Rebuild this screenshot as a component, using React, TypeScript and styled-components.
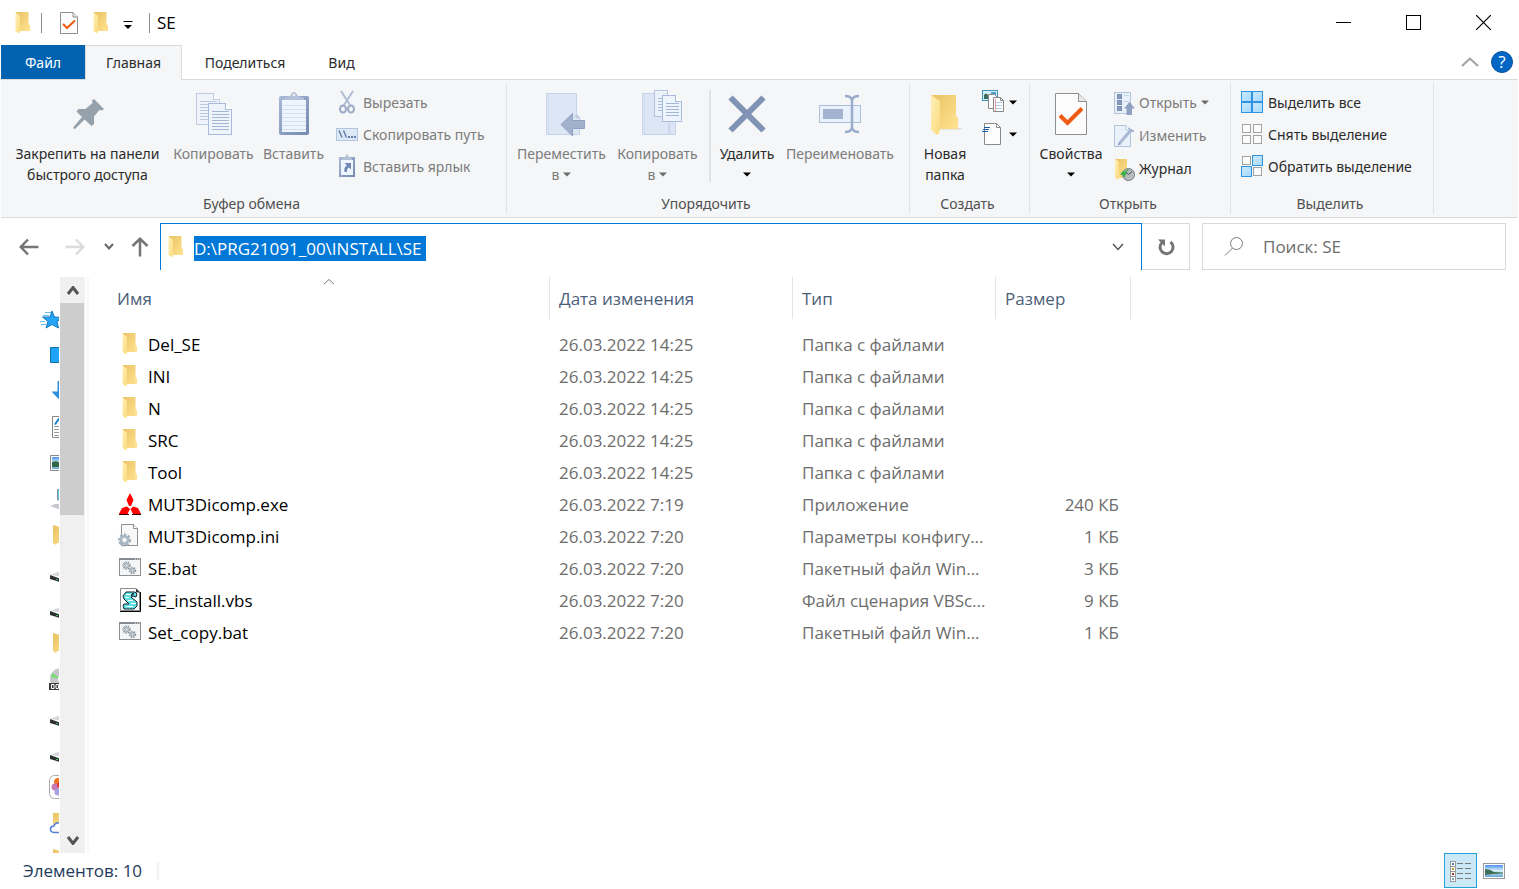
import React from "react";
import styled, { createGlobalStyle } from "styled-components";

const GlobalStyle = createGlobalStyle`
  *, *::before, *::after { box-sizing: border-box; }
  html, body { margin: 0; padding: 0; background: #fff; }
  body, button, input { font-family: "Open Sans", "Noto Sans", sans-serif; }
  button { border: 0; padding: 0; margin: 0; background: none; color: inherit; }
  svg { display: block; flex: none; }
`;

const ribbonFont = `"Noto Sans", "Open Sans", sans-serif`;

/* ---------- Layout ---------- */

const Window = styled.div`
  display: flex;
  flex-direction: column;
  height: 100vh;
  padding: 0 1px;
  overflow: hidden;
  background: #fff;
  color: #000;
  font-size: 17px;
`;

const TitleBar = styled.header`
  display: flex;
  align-items: center;
  height: 45px;
  flex: none;
  padding-left: 14px;
`;

const TitleSeparator = styled.span`
  width: 1px;
  height: 20px;
  margin: 0 7px 0 10px;
  background: #8c8c8c;
`;

const QuickAccess = styled.div`
  display: flex;
  align-items: center;
  padding-left: 4px;
`;

const QuickButton = styled.button<{ $narrow?: boolean }>`
  display: grid;
  place-items: center;
  width: ${(p) => (p.$narrow ? 22 : 32)}px;
  height: 32px;
`;

const WindowTitle = styled.h1`
  flex: 1;
  margin: 0;
  font-size: 17px;
  font-weight: 400;
`;

const CaptionButton = styled.button`
  display: grid;
  place-items: center;
  width: 70px;
  height: 45px;
`;

const TabBar = styled.nav`
  display: flex;
  height: 35px;
  flex: none;
  border-bottom: 1px solid #dadbdc;
`;

const Tab = styled.button<{ $width: number; $kind?: "file" | "active" }>`
  width: ${(p) => p.$width}px;
  height: ${(p) => (p.$kind === "active" ? 35 : 34)}px;
  padding-bottom: ${(p) => (p.$kind === "active" ? 2 : 0)}px;
  font-family: ${ribbonFont};
  font-size: 14px;
  color: ${(p) => (p.$kind === "file" ? "#fff" : "#2b2b2b")};
  background: ${(p) =>
    p.$kind === "file" ? "#0063b1" : p.$kind === "active" ? "#f5f6f7" : "none"};
  border: ${(p) => (p.$kind === "active" ? "1px solid #dadbdc" : "0")};
  border-bottom: 0;
`;

const TabTools = styled.div`
  display: flex;
  align-items: center;
  gap: 12px;
  margin-left: auto;
  padding-right: 5px;
`;

const HelpButton = styled.button`
  width: 22px;
  height: 22px;
  border: 1px solid #0a4f9c;
  border-radius: 50%;
  background: #0067c5;
  color: #fff;
  font-size: 17px;
  line-height: 20px;
`;

const Ribbon = styled.div`
  display: flex;
  height: 138px;
  flex: none;
  background: #f5f6f7;
  border-bottom: 1px solid #dadbdc;
`;

const Group = styled.section<{ $width: number }>`
  display: flex;
  flex-direction: column;
  justify-content: space-between;
  width: ${(p) => p.$width}px;
  margin: 3px 0;
  border-right: 1px solid #e2e3e4;
`;

const GroupBody = styled.div`
  display: flex;
  align-items: flex-start;
  gap: 4px;
  padding: 0 5px;
`;

const GroupTitle = styled.h2`
  margin: 0;
  padding-right: 4px;
  font-family: ${ribbonFont};
  font-size: 14px;
  font-weight: 400;
  line-height: 21px;
  text-align: center;
  color: #505050;
`;

const LargeButton = styled.button<{ $width: number }>`
  display: flex;
  flex-direction: column;
  align-items: center;
  width: ${(p) => p.$width}px;
  padding-top: 7px;
  font-family: ${ribbonFont};
  font-size: 14px;
  line-height: 21px;
  color: #2b2b2b;
  white-space: nowrap;

  &:disabled { color: #7c7c7c; }
`;

const LargeLabel = styled.span`
  display: flex;
  flex-direction: column;
  align-items: center;
  margin-top: 5px;
`;

const LabelLine = styled.span`
  display: flex;
  align-items: center;
  gap: 4px;
  height: 21px;
`;

const SmallColumn = styled.div`
  display: flex;
  flex-direction: column;
  padding: 3px 0 0 3px;
`;

const SmallButton = styled.button<{ $tall?: boolean }>`
  display: flex;
  align-items: center;
  gap: 4px;
  height: ${(p) => (p.$tall ? 33 : 32)}px;
  font-family: ${ribbonFont};
  font-size: 14px;
  color: #2b2b2b;
  white-space: nowrap;

  &:disabled { color: #7c7c7c; }
`;

const BodySeparator = styled.span`
  width: 2px;
  height: 92px;
  margin: 7px 0 0 5px;
  background: #e2e3e4;
`;

const NavRow = styled.div`
  display: flex;
  align-items: center;
  height: 59px;
  flex: none;
  padding: 5px 12px 7px 5px;
`;

const NavButton = styled.button<{ $width: number }>`
  display: grid;
  place-items: center;
  width: ${(p) => p.$width}px;
  height: 47px;
`;

const AddressBar = styled.form`
  display: flex;
  align-items: center;
  flex: 1;
  height: 47px;
  padding-left: 7px;
  border: 1px solid #0078d7;
  border-bottom: 0;
`;

const AddressInput = styled.input`
  width: 232px;
  height: 25px;
  margin: 3px auto 0 10px;
  padding: 0;
  border: 0;
  outline: 0;
  background: #0078d7;
  color: #fff;
  font-size: 17px;
`;

const AddressDrop = styled.button`
  display: grid;
  place-items: center;
  width: 47px;
  height: 45px;
`;

const RefreshButton = styled.button`
  display: grid;
  place-items: center;
  width: 48px;
  height: 47px;
  border: 1px solid #d9d9d9;
  border-left: 0;
`;

const SearchBox = styled.label`
  display: flex;
  align-items: center;
  gap: 19px;
  width: 304px;
  height: 47px;
  margin-left: 12px;
  padding-left: 21px;
  border: 1px solid #d9d9d9;
`;

const SearchInput = styled.input`
  flex: 1;
  min-width: 0;
  padding: 0;
  border: 0;
  outline: 0;
  background: none;
  font-size: 17px;

  &::placeholder { color: #6d6d6d; opacity: 1; }
`;

const Content = styled.main`
  display: flex;
  flex: 1;
  min-height: 0;
`;

const TreePane = styled.nav`
  width: 58px;
  overflow: hidden;
  padding: 24px 0 0 39px;
`;

const TreeList = styled.ul`
  margin: 0;
  padding: 0;
  list-style: none;
`;

const TreeLink = styled.a`
  display: block;
  height: 36px;
`;

const ScrollBar = styled.div`
  display: flex;
  flex-direction: column;
  width: 25px;
  margin-left: 1px;
  background: #f0f0f0;
`;

const ScrollButton = styled.button`
  display: grid;
  place-items: center;
  height: 26px;
`;

const ScrollTrack = styled.div`
  flex: 1;
`;

const ScrollThumb = styled.div`
  width: 24px;
  height: 40.5%;
  background: #cdcdcd;
`;

const FilePane = styled.section`
  flex: 1;
  min-width: 0;
  margin-left: 2px;
  padding-left: 19px;
  border-left: 2px solid #f7f7f7;
  overflow: hidden;
`;

const FileTable = styled.table`
  width: 1023px;
  table-layout: fixed;
  border-collapse: separate;
  border-spacing: 0;

  tbody::before { content: ""; display: block; height: 9px; }
`;

const HeadCell = styled.th`
  position: relative;
  height: 42px;
  padding: 0 9px;
  border-right: 1px solid #e5e5e5;
  font-weight: 400;
  text-align: left;
  color: #4c607a;
`;

const SortMark = styled.span`
  position: absolute;
  top: 1px;
  left: 50%;
  transform: translateX(-50%);
`;

const Cell = styled.td<{ $right?: boolean }>`
  height: 32px;
  padding: 0 12px 0 9px;
  color: #6d6d6d;
  text-align: ${(p) => (p.$right ? "right" : "left")};
  white-space: nowrap;
`;

const FileName = styled.a`
  display: flex;
  align-items: center;
  gap: 6px;
  padding-left: 1px;
  color: #000;
  text-decoration: none;
`;

const StatusBar = styled.footer`
  display: flex;
  align-items: center;
  height: 36px;
  flex: none;
  padding: 0 8px 0 22px;
  color: #1e395b;
`;

const StatusText = styled.span`
  margin-right: auto;
  padding-right: 15px;
  border-right: 2px solid #f2f2f2;
  line-height: 18px;
`;

const ViewButton = styled.button<{ $on?: boolean }>`
  display: grid;
  place-items: center;
  align-self: flex-start;
  width: 33px;
  height: 35px;
  border: 1px solid ${(p) => (p.$on ? "#26a0da" : "transparent")};
  background: ${(p) => (p.$on ? "#cbe8f6" : "none")};
`;

/* ---------- Icons ---------- */

const Gradients = () => (
  <svg width="0" height="0" style={{ position: "absolute" }} aria-hidden="true">
    <defs>
      <linearGradient id="fold" x1="0" x2="1" y1="0" y2="1">
        <stop offset="0" stopColor="#e9c263" />
        <stop offset="1" stopColor="#ffe391" />
      </linearGradient>
      <linearGradient id="flap" x1="0" x2="1" y1="0" y2="1">
        <stop offset="0" stopColor="#fff0b8" />
        <stop offset="1" stopColor="#fbda7d" />
      </linearGradient>
      <linearGradient id="tile" x1="0" x2="1" y1="0" y2="1">
        <stop offset="0" stopColor="#cdeaff" />
        <stop offset="1" stopColor="#a3d8ff" />
      </linearGradient>
      <linearGradient id="board" x1="0" x2="1" y1="0" y2="1">
        <stop offset="0" stopColor="#a9b9d6" />
        <stop offset="1" stopColor="#7388b0" />
      </linearGradient>
      <linearGradient id="photo" x1="0" x2="0" y1="0" y2="1">
        <stop offset="0" stopColor="#4a8ff0" />
        <stop offset="0.45" stopColor="#d4ecf5" />
        <stop offset="0.7" stopColor="#b4dcea" />
        <stop offset="1" stopColor="#5f9fd0" />
      </linearGradient>
    </defs>
  </svg>
);

const Folder = ({ w = 16, h = 22 }: { w?: number; h?: number }) => (
  <svg width={w} height={h} viewBox="0 0 16 22">
    <path d="M1 0H13.500V12L15 13.500V19H1z" fill="url(#fold)" />
    <path d="M0.500 0.500L5 3.500V19.500L4 21.500L0.500 19z" fill="url(#flap)" />
  </svg>
);

const FolderLarge = () => (
  <svg width="48" height="48" viewBox="0 0 48 48">
    <path d="M36 38h5l-2 1.500H14z" fill="#d8d8d8" />
    <path d="M10 5h25v21l2 2v11H10z" fill="url(#fold)" />
    <path d="M10 5l9 6v28l-1 4-2 2-6-5z" fill="url(#flap)" />
  </svg>
);

const CheckPage = () => (
  <svg width="18" height="22" viewBox="0 0 18 22">
    <path d="M0.500 0.500H13L17.500 5V21.500H0.500z" fill="#fcfcfc" stroke="#8f8f8f" />
    <path d="M13 0.500V5H17.500" fill="#e9e9e9" stroke="#8f8f8f" />
    <path d="M3 12l4 4L15 8.500" fill="none" stroke="#ef5a14" strokeWidth="2" />
  </svg>
);

const Caret = ({ color = "#000" }: { color?: string }) => (
  <svg width="8" height="5" viewBox="0 0 8 5">
    <path d="M0 0.500H8L4 4.500z" fill={color} />
  </svg>
);

const Chevron = ({
  w, h, up, color, sw = 2,
}: { w: number; h: number; up?: boolean; color: string; sw?: number }) => (
  <svg width={w} height={h} viewBox={`0 0 ${w} ${h}`}>
    <path
      d={up ? `M1 ${h - 1}L${w / 2} 1.500L${w - 1} ${h - 1}` : `M1 1L${w / 2} ${h - 1.5}L${w - 1} 1`}
      fill="none" stroke={color} strokeWidth={sw}
    />
  </svg>
);

const PinIcon = () => (
  <svg width="48" height="48" viewBox="0 0 48 48">
    <path d="M30 9L40 19L38 20.500L35.500 20L30 26.500L30 34L27.500 36L20.500 29.500L11 39L9.500 38.500V37L18 27L12.500 21.500L14.500 19H21.500L28.500 13L28 10.500z" fill="#95a1ab" />
  </svg>
);

const MiniPage = ({ x, y, w, h, step = 3 }: { x: number; y: number; w: number; h: number; step?: number }) => {
  const lines: number[] = [];
  for (let ly = y + 8; ly < y + h - 3; ly += step) lines.push(ly);
  return (
    <g shapeRendering="crispEdges">
      <path d={`M${x} ${y}h${w - 6}l6 6v${h - 6}h${-w}z`} fill="#eef4fc" stroke="#a8bbdb" />
      <path d={`M${x + w - 6} ${y}v6h6`} fill="#fff" stroke="#a8bbdb" />
      {lines.map((ly) => (
        <path key={ly} d={`M${x + 3} ${ly}h${w - 6}`} stroke="#a3b6d6" />
      ))}
    </g>
  );
};

const CopyIcon = () => (
  <svg width="48" height="48" viewBox="0 0 48 48">
    <g opacity="0.7"><MiniPage x={6.5} y={3.5} w={23} h={31} /></g>
    <MiniPage x={18.5} y={13.5} w={23} h={31} />
  </svg>
);

const PasteIcon = () => (
  <svg width="48" height="48" viewBox="0 0 48 48">
    <rect x="9" y="6" width="30" height="39" rx="2" fill="url(#board)" />
    <path d="M12 10H36V42H12z" fill="#eef5fe" />
    {[16, 20, 24, 28, 32, 36, 40].map((y) => (
      <path key={y} d={`M12 ${y - 0.5}H36`} stroke="#d3e0f0" />
    ))}
    <path d="M14 10V8l6-2 2-3q2-2 4 0l2 3 6 2v2z" fill="#b3c0d8" />
    <circle cx="24" cy="5" r="1.300" fill="#f5f6f7" />
  </svg>
);

const CutIcon = () => (
  <svg width="23" height="24" viewBox="0 0 23 24" fill="none" stroke="#9babc7">
    <path d="M5 1L14 15M17 1L8 15" stroke="#afbcd3" strokeWidth="2" />
    <ellipse cx="7" cy="19" rx="3" ry="3.500" strokeWidth="2" />
    <ellipse cx="15" cy="19" rx="3" ry="3.500" strokeWidth="2" />
  </svg>
);

const PathIcon = () => (
  <svg width="23" height="24" viewBox="0 0 23 24">
    <rect x="0.5" y="6.500" width="21" height="12" fill="#dde8f6" stroke="#b4c5e2" />
    <path d="M3 8.500L6 15.500M7.500 8.500L10.500 15.500" stroke="#6a7fa8" strokeWidth="1.500" />
    <path d="M12 15h2M15 15h2M18 15h2" stroke="#6a7fa8" strokeWidth="2" />
  </svg>
);

const ShortcutIcon = () => (
  <svg width="23" height="24" viewBox="0 0 23 24">
    <rect x="3" y="3" width="16" height="20" fill="url(#board)" />
    <rect x="5" y="6" width="12" height="15" fill="#eef5fe" />
    <path d="M6 6V4l3-1 2-3 2 3 3 1v2z" fill="#b3c0d8" />
    <path d="M8.500 9H15V15.500L13 13.500Q10.500 15 11 18H8.500Q7.500 14 10.700 11.200z" fill="#7188b3" />
  </svg>
);

const MoveToIcon = () => (
  <svg width="48" height="48" viewBox="0 0 48 48">
    <path d="M8.500 3.500H38.500V25L41.500 28V44.500H8.500z" fill="#dce6f5" stroke="#c5d4ec" />
    <path d="M10.500 4V44" stroke="#cfdcf0" />
    <path d="M36 27l3-3 4 5z" fill="#c0cce0" />
    <path d="M23 34.500L34.500 23.500V30.500H46.500V38.500H34.500V46z" fill="#a1b1cc" stroke="#8fa1c1" />
  </svg>
);

const CopyToIcon = () => (
  <svg width="48" height="48" viewBox="0 0 48 48">
    <path d="M8.500 3.500H35V44.500H8.500z" fill="#dce6f5" stroke="#c5d4ec" />
    <path d="M35.500 24H41.500V44.500H35.500z" fill="#dbe5f4" stroke="#c5d4ec" />
    <path d="M10.500 4V44" stroke="#cfdcf0" />
    <g opacity="0.8"><MiniPage x={20.5} y={0.5} w={19} h={26} /></g>
    <MiniPage x={28.5} y={5.5} w={19} h={26} />
  </svg>
);

const DeleteIcon = () => (
  <svg width="48" height="48" viewBox="0 0 48 48">
    <path d="M7.500 7.500L40.500 40.500M40.500 7.500L7.500 40.500" stroke="#8193b5" strokeWidth="6" />
  </svg>
);

const RenameIcon = () => (
  <svg width="48" height="48" viewBox="0 0 48 48" fill="none">
    <rect x="3.500" y="15.500" width="41" height="17" fill="#e8f1fc" stroke="#aebfdc" />
    <rect x="7" y="19" width="20" height="10" fill="#a3b3d0" />
    <path d="M36 9V39" stroke="#9aacca" strokeWidth="2.500" />
    <path d="M29 6q6 0 7 4q1-4 7-4M29 42q6 0 7-4q1 4 7 4" stroke="#9aacca" strokeWidth="2.500" />
  </svg>
);

const NewItemIcon = () => (
  <svg width="23" height="24" viewBox="0 0 23 24">
    <rect x="0.500" y="0.500" width="15" height="10" fill="#d7f0fa" stroke="#3e93b8" />
    <path d="M2 9V5q2-3 4 0v4z" fill="#3a6a5a" />
    <path d="M9 2h5v4H9z" fill="#4b9fd0" />
    <path d="M6.500 4.500H12.500L15.500 7.500V18.500H6.500z" fill="#fff" stroke="#8a8a8a" />
    <path d="M11.500 7.500H18.500L21.500 10.500V21.500H11.500z" fill="#fff" stroke="#8a8a8a" />
    <path d="M18.500 7.500V10.500H21.500" fill="none" stroke="#8a8a8a" />
    <path d="M13 12.500H20M13 15.500H20M13 18.500H20" stroke="#a9cdf0" />
    <path d="M13.500 9V21" stroke="#f0a0a0" />
  </svg>
);

const EasyAccessIcon = () => (
  <svg width="23" height="24" viewBox="0 0 23 24">
    <path d="M2.500 1.500H14.500L18.500 5.500V22.500H2.500z" fill="#fdfdfd" stroke="#8a8a8a" />
    <path d="M14.500 1.500V5.500H18.500" fill="none" stroke="#8a8a8a" />
    <path d="M2 5.500H8M1 7.500H7M0 9.500H6" stroke="#1c5fa8" strokeWidth="1.200" />
  </svg>
);

const PropertiesIcon = () => (
  <svg width="48" height="48" viewBox="0 0 48 48">
    <path d="M8.500 3.500H31.500L39.500 11.500V44.500H8.500z" fill="#fcfcfc" stroke="#8f8f8f" />
    <path d="M31.500 3.500V11.500H39.500" fill="#e9e9e9" stroke="#8f8f8f" />
    <path d="M13 25.500L20.500 33L35 18.500" fill="none" stroke="#ef5a14" strokeWidth="4" />
  </svg>
);

const OpenIcon = () => (
  <svg width="21" height="24" viewBox="0 0 21 24">
    <rect x="0.500" y="1.500" width="16" height="21" fill="#e9f1fb" stroke="#b4c3dc" />
    {[3.5, 9.5, 15.5].map((y) => (
      <rect key={y} x="3.500" y={y} width="4" height="4" fill="#8b9dbf" stroke="#7a8db2" />
    ))}
    <path d="M10 4.500h5M10 10.500h5" stroke="#c5d2e6" />
    <path d="M15.500 11L21 17.500H18V24H12.500V17.500H10z" fill="#8fa1c2" />
  </svg>
);

const EditIcon = () => (
  <svg width="21" height="24" viewBox="0 0 21 24">
    <path d="M0.500 1.500H12L16.500 6V22.500H0.500z" fill="#e9f1fb" stroke="#b4c3dc" />
    <path d="M12 1.500V6H16.500" fill="#fff" stroke="#b4c3dc" />
    <path d="M5 20L17 6" stroke="#a9b8d3" strokeWidth="3" />
    <path d="M14 4L20 7L18 8z" fill="#a2b2cf" stroke="#a2b2cf" />
    <path d="M3.500 22L6.500 20L5 18.500z" fill="#8b9dbf" />
  </svg>
);

const HistoryIcon = () => (
  <svg width="21" height="24" viewBox="0 0 21 24">
    <path d="M1 2H13V18L14 21H3z" fill="url(#fold)" />
    <path d="M1 2l4 3v14l-1 4-3-2z" fill="url(#flap)" />
    <circle cx="14.500" cy="17.500" r="6" fill="#b9bcbf" stroke="#74787c" />
    <path d="M14.500 17.500L18 14.500M14.500 17.500L11.500 15" stroke="#45494d" />
    <path d="M6 17.500L10 13V15.500Q13 12 16 12Q11 15 11.500 20Q9 20 9.500 18z" fill="#31b544" />
  </svg>
);

const TilesIcon = ({ on }: { on: number[] }) => (
  <svg width="25" height="24" viewBox="-2 0 25 24">
    {[0, 1, 2, 3].map((i) => {
      const x = (i % 2) * 11;
      const y = (i >> 1) * 11 + 1;
      return on.includes(i) ? (
        <rect key={i} x={x + 0.5} y={y + 0.5} width="10" height="10" fill="url(#tile)" stroke="#2f93df" />
      ) : (
        <rect key={i} x={x + 1.5} y={y + 1.5} width="8" height="8" fill="#fbfbfb" stroke="#a3a3a3" />
      );
    })}
  </svg>
);

const ArrowIcon = ({ color, turn }: { color: string; turn: number }) => (
  <svg width="20" height="20" viewBox="0 0 20 20">
    <g transform={`rotate(${turn} 10 10)`} fill="none" stroke={color} strokeWidth="2.500">
      <path d="M1 10H19.500M9 2.500L1.800 10L9 17.500" />
    </g>
  </svg>
);

const RefreshIcon = () => (
  <svg width="18" height="18" viewBox="0 0 18 18">
    <path d="M5 4.500A6.500 6.500 0 1 0 13.500 4" fill="none" stroke="#757575" strokeWidth="3" />
    <path d="M1 1.500H8V8.500z" fill="#757575" />
  </svg>
);

const SearchIcon = () => (
  <svg width="20" height="20" viewBox="0 0 20 20" fill="none" stroke="#7a7a7a">
    <circle cx="12.500" cy="6.500" r="6" />
    <path d="M8.500 11L1 18.500" />
  </svg>
);

const ExeIcon = () => (
  <svg width="24" height="24" viewBox="0 0 24 24">
    <path d="M1 22.500H11M14 22.500H23" stroke="#300" />
    <g fill="#f00">
      <path d="M12 1L15.500 8L13 14H11L8.500 8z" />
      <path d="M9 14.500L12 17L9.500 22H1L4 16z" />
      <path d="M15 14.500L12.500 17L15 22H23L20 16z" />
    </g>
  </svg>
);

const Gear = ({ x, y, r }: { x: number; y: number; r: number }) => (
  <g fill="none">
    <circle cx={x} cy={y} r={r} stroke="#8f979e" strokeWidth="1.500" strokeDasharray="1.500 1" />
    <circle cx={x} cy={y} r={r - 1} fill="#d8dfe5" stroke="#9aa5ae" />
    <circle cx={x} cy={y} r={r * 0.3} fill="#fff" stroke="#8f979e" strokeWidth="0.700" />
  </g>
);

const IniIcon = () => (
  <svg width="24" height="24" viewBox="0 0 24 24">
    <path d="M3.500 0.500H15.500L19.500 4.500V21.500H3.500z" fill="#f8f8f8" stroke="#8f8f8f" />
    <path d="M15.500 0.500V4.500H19.500" fill="#fff" stroke="#8f8f8f" />
    <circle cx="6.500" cy="16" r="5.500" fill="none" stroke="#9fadb9" strokeWidth="2" strokeDasharray="2.500 1.600" />
    <circle cx="6.500" cy="16" r="3.700" fill="#dfe6ec" stroke="#a9b7c3" strokeWidth="2.500" />
    <circle cx="6.500" cy="16" r="1.500" fill="#fff" />
  </svg>
);

const BatIcon = () => (
  <svg width="24" height="24" viewBox="0 0 24 24">
    <rect x="1.500" y="2.500" width="21" height="17" fill="#f5f6f7" stroke="#8f8f8f" />
    <path d="M1 3H23" stroke="#858b91" strokeWidth="2" />
    <path d="M17 3h1M19 3h1M21 3h1" stroke="#fff" />
    <Gear x={8.5} y={9.5} r={3.5} />
    <Gear x={14.5} y={14.5} r={3} />
  </svg>
);

const VbsIcon = () => (
  <svg width="24" height="24" viewBox="0 0 24 24">
    <path d="M2.500 0.500H18L21.500 4V22.500H2.500z" fill="#fdfdfd" stroke="#8a8a8a" />
    <path d="M2 23.500H22.500V4" fill="none" stroke="#000" />
    <path d="M18 0.500V4.500H22z" fill="#333" />
    <path d="M8 4H17L19 6L18 9L15 8L13 9L19 14L19 18L16 21H6L5 18L6 16H11L6 11L5 8z" fill="#5fe0e0" stroke="#123" />
    <path d="M8 6.500H13M7.500 9.500H11M10 12.500H15M13 15.500H18M8 18.500H15" stroke="#fff" />
    <path d="M14 8Q13 6 16 5.500" stroke="#123" strokeWidth="1.500" fill="none" />
  </svg>
);

const DetailsIcon = () => (
  <svg width="24" height="24" viewBox="0 0 24 24">
    {["#3f83a8", "#b09a2a", "#b03a2a", "#7fa8b8"].map((c, i) => (
      <g key={c}>
        <rect x="1.500" y={2.5 + i * 5} width="5" height="5" fill="#fff" stroke="#9a9a9a" />
        <rect x="3" y={4 + i * 5} width="2" height="2" fill={c} />
        <path d={`M8 ${4.5 + i * 5}h6M16 ${4.5 + i * 5}h6`} stroke="#7a7a7a" />
      </g>
    ))}
  </svg>
);

const PictureIcon = () => (
  <svg width="22" height="16" viewBox="0 0 22 16">
    <rect x="0.500" y="0.500" width="21" height="15" fill="#fff" stroke="#9a9a9a" />
    <rect x="2" y="2" width="18" height="12" fill="url(#photo)" />
    <path d="M2 6Q7 6 11 9L20 9.500V10.500L10 11L2 12z" fill="#3f6f5a" />
  </svg>
);

/* Icons of the navigation tree; the pane shows only their left part. */
const treeIcons: Record<string, React.ReactNode> = {
  star: (
    <>
      <path d="M12 10L14.500 16L23 16.500L17 20.500L18.500 27L12 23.500L6 27L8 20.500L2.500 16H10z" fill="#27a5f5" stroke="#1479bd" />
      <path d="M5 11.500h6M3 14.500h6M0 20.500h5M1 23.500h5" stroke="#6bbdf0" />
    </>
  ),
  desktop: <path d="M10.500 10.500H32V25.500H10.500z" fill="#20a4f8" stroke="#0d6fb0" />,
  down: <path d="M17.500 8H23V19H27L18.500 26L11.500 18.500H17.500z" fill="#2e8fdc" />,
  doc: (
    <>
      <path d="M12.500 7.500H30V28.500H12.500z" fill="#fff" stroke="#888" />
      <path d="M15 15.500l4-6" stroke="#1d82c8" strokeWidth="2" />
      <path d="M14 17.500h6M14 20.500h6M14 23.500h6M14 26.500h6" stroke="#999" />
    </>
  ),
  image: (
    <>
      <path d="M10.500 10.500H32V25.500H10.500z" fill="#fff" stroke="#888" />
      <path d="M12 12H32V24H12z" fill="url(#photo)" />
      <path d="M12 17Q17 15 20 18V22H12z" fill="#2e6648" />
    </>
  ),
  pc: (
    <>
      <path d="M17.500 8.500H32V19H17.500z" fill="#5fc6ee" stroke="#8a9299" />
      <path d="M10 25l5-2h8v5h-5z" fill="#c3c9ce" />
    </>
  ),
  folder: <path d="M13 8L18 9.500H30V26H17L16 28L13 26z" fill="url(#fold)" />,
  drive: (
    <>
      <path d="M10 22L18 19H30V25z" fill="#d5d7d9" />
      <path d="M10 22L20 25.500V29L10 26z" fill="#2c2f31" />
      <path d="M16 26.500h2" stroke="#39c463" />
    </>
  ),
  disc: (
    <>
      <circle cx="21" cy="18" r="11" fill="#c4c8ca" />
      <path d="M21 18L12 12L11 16z" fill="#6fe06a" />
      <circle cx="21" cy="18" r="3" fill="#fff" />
      <path d="M9 22H30V29H9z" fill="#3a3a3a" />
      <path d="M11.500 23.500h2.500v4h-2.500zM16 23.500h2.500v4H16z" fill="none" stroke="#fff" />
    </>
  ),
  photos: (
    <>
      <rect x="9.500" y="6.500" width="24" height="23" rx="5" fill="#fff" stroke="#aaa" />
      <circle cx="18" cy="13" r="4" fill="#f2761f" />
      <circle cx="15" cy="18" r="3.500" fill="#c77bb5" />
      <circle cx="18" cy="23" r="3.500" fill="#a6a1dd" />
      <circle cx="20" cy="16" r="3" fill="#e8303a" />
    </>
  ),
  cloud: (
    <>
      <path d="M13 8H30V20H13z" fill="url(#fold)" />
      <path d="M22 27.500H14Q10 27 10.500 23.500Q11 21 14 21Q15 17 22 18" fill="#fff" stroke="#4f82d8" strokeWidth="1.500" />
    </>
  ),
};

const treeItems: [string, string][] = [
  ["star", "Быстрый доступ"], ["desktop", "Рабочий стол"], ["down", "Загрузки"],
  ["doc", "Документы"], ["image", "Изображения"], ["pc", "Этот компьютер"],
  ["folder", "Папка"], ["drive", "Диск"], ["drive", "Диск"], ["folder", "Папка"],
  ["disc", "Дисковод"], ["drive", "Диск"], ["drive", "Диск"],
  ["photos", "Фото"], ["cloud", "Облако"], ["folder", "Папка"],
];

/* ---------- Data ---------- */

type FileKind = "folder" | "exe" | "ini" | "bat" | "vbs";

const fileIcons: Record<FileKind, React.ReactNode> = {
  folder: <Folder w={24} />,
  exe: <ExeIcon />,
  ini: <IniIcon />,
  bat: <BatIcon />,
  vbs: <VbsIcon />,
};

const files: { kind: FileKind; name: string; date: string; type: string; size: string }[] = [
  ...["Del_SE", "INI", "N", "SRC", "Tool"].map((name) => ({
    kind: "folder" as FileKind, name, date: "26.03.2022 14:25", type: "Папка с файлами", size: "",
  })),
  { kind: "exe", name: "MUT3Dicomp.exe", date: "26.03.2022 7:19", type: "Приложение", size: "240 КБ" },
  { kind: "ini", name: "MUT3Dicomp.ini", date: "26.03.2022 7:20", type: "Параметры конфигу...", size: "1 КБ" },
  { kind: "bat", name: "SE.bat", date: "26.03.2022 7:20", type: "Пакетный файл Win...", size: "3 КБ" },
  { kind: "vbs", name: "SE_install.vbs", date: "26.03.2022 7:20", type: "Файл сценария VBSc...", size: "9 КБ" },
  { kind: "bat", name: "Set_copy.bat", date: "26.03.2022 7:20", type: "Пакетный файл Win...", size: "1 КБ" },
];

/* ---------- Parts ---------- */

type LargeProps = {
  icon: React.ReactNode;
  lines: string[];
  width: number;
  disabled?: boolean;
  caret?: boolean;
};

const Large = ({ icon, lines, width, disabled, caret }: LargeProps) => (
  <LargeButton $width={width} disabled={disabled}>
    {icon}
    <LargeLabel>
      {lines.map((line, i) => (
        <LabelLine key={i}>
          {line}
          {caret && i === lines.length - 1 && <Caret color={disabled ? "#6a6a6a" : "#000"} />}
        </LabelLine>
      ))}
    </LargeLabel>
  </LargeButton>
);

export default function App() {
  return (
    <Window>
      <GlobalStyle />
      <Gradients />

      <TitleBar>
        <Folder />
        <TitleSeparator />
        <QuickAccess>
          <QuickButton aria-label="Свойства"><CheckPage /></QuickButton>
          <QuickButton aria-label="Новая папка"><Folder /></QuickButton>
          <QuickButton $narrow aria-label="Настройка панели">
            <svg width="10" height="12" viewBox="0 0 10 12">
              <path d="M0.500 4.500H9.500" stroke="#000" />
              <path d="M1 8H9L5 12z" />
            </svg>
          </QuickButton>
        </QuickAccess>
        <TitleSeparator />
        <WindowTitle>SE</WindowTitle>
        <CaptionButton aria-label="Свернуть">
          <svg width="15" height="15"><path d="M0 7.500H15" stroke="#000" /></svg>
        </CaptionButton>
        <CaptionButton aria-label="Развернуть">
          <svg width="15" height="15"><rect x="0.500" y="0.500" width="14" height="14" fill="none" stroke="#000" /></svg>
        </CaptionButton>
        <CaptionButton aria-label="Закрыть">
          <svg width="15" height="15"><path d="M0 0L15 15M15 0L0 15" stroke="#000" strokeWidth="1.200" /></svg>
        </CaptionButton>
      </TitleBar>

      <TabBar>
        <Tab $width={84} $kind="file">Файл</Tab>
        <Tab $width={97} $kind="active">Главная</Tab>
        <Tab $width={126}>Поделиться</Tab>
        <Tab $width={67}>Вид</Tab>
        <TabTools>
          <button aria-label="Свернуть ленту"><Chevron w={18} h={10} up color="#a0a0a0" /></button>
          <HelpButton aria-label="Справка">?</HelpButton>
        </TabTools>
      </TabBar>

      <Ribbon>
        <Group $width={506}>
          <GroupBody>
            <Large icon={<PinIcon />} lines={["Закрепить на панели", "быстрого доступа"]} width={163} />
            <Large icon={<CopyIcon />} lines={["Копировать"]} width={81} disabled />
            <Large icon={<PasteIcon />} lines={["Вставить"]} width={71} disabled />
            <SmallColumn>
              <SmallButton disabled><CutIcon />Вырезать</SmallButton>
              <SmallButton disabled><PathIcon />Скопировать путь</SmallButton>
              <SmallButton disabled><ShortcutIcon />Вставить ярлык</SmallButton>
            </SmallColumn>
          </GroupBody>
          <GroupTitle>Буфер обмена</GroupTitle>
        </Group>

        <Group $width={403}>
          <GroupBody>
            <Large icon={<MoveToIcon />} lines={["Переместить", "в"]} width={99} caret disabled />
            <Large icon={<CopyToIcon />} lines={["Копировать", "в"]} width={85} caret disabled />
            <BodySeparator />
            <Large icon={<DeleteIcon />} lines={["Удалить", ""]} width={64} caret />
            <Large icon={<RenameIcon />} lines={["Переименовать"]} width={114} disabled />
          </GroupBody>
          <GroupTitle>Упорядочить</GroupTitle>
        </Group>

        <Group $width={120}>
          <GroupBody>
            <Large icon={<FolderLarge />} lines={["Новая", "папка"]} width={60} />
            <SmallColumn>
              <SmallButton aria-label="Создать элемент"><NewItemIcon /><Caret /></SmallButton>
              <SmallButton aria-label="Простой доступ"><EasyAccessIcon /><Caret /></SmallButton>
            </SmallColumn>
          </GroupBody>
          <GroupTitle>Создать</GroupTitle>
        </Group>

        <Group $width={201}>
          <GroupBody>
            <Large icon={<PropertiesIcon />} lines={["Свойства", ""]} width={72} caret />
            <SmallColumn>
              <SmallButton $tall disabled><OpenIcon />Открыть <Caret color="#6a6a6a" /></SmallButton>
              <SmallButton $tall disabled><EditIcon />Изменить</SmallButton>
              <SmallButton $tall><HistoryIcon />Журнал</SmallButton>
            </SmallColumn>
          </GroupBody>
          <GroupTitle>Открыть</GroupTitle>
        </Group>

        <Group $width={203}>
          <GroupBody>
            <SmallColumn>
              <SmallButton><TilesIcon on={[0, 1, 2, 3]} />Выделить все</SmallButton>
              <SmallButton><TilesIcon on={[]} />Снять выделение</SmallButton>
              <SmallButton><TilesIcon on={[1, 2]} />Обратить выделение</SmallButton>
            </SmallColumn>
          </GroupBody>
          <GroupTitle>Выделить</GroupTitle>
        </Group>
      </Ribbon>

      <NavRow>
        <NavButton $width={46} aria-label="Назад"><ArrowIcon color="#757575" turn={0} /></NavButton>
        <NavButton $width={46} aria-label="Вперед"><ArrowIcon color="#dcdcdc" turn={180} /></NavButton>
        <NavButton $width={22} aria-label="Последние расположения"><Chevron w={10} h={7} color="#666" /></NavButton>
        <NavButton $width={40} aria-label="Вверх"><ArrowIcon color="#757575" turn={90} /></NavButton>
        <AddressBar>
          <Folder />
          <AddressInput aria-label="Адрес" defaultValue="D:\PRG21091_00\INSTALL\SE" />
          <AddressDrop type="button" aria-label="Предыдущие расположения">
            <Chevron w={12} h={8} color="#555" sw={1.5} />
          </AddressDrop>
        </AddressBar>
        <RefreshButton aria-label="Обновить"><RefreshIcon /></RefreshButton>
        <SearchBox>
          <SearchIcon />
          <SearchInput type="text" aria-label="Поиск" placeholder="Поиск: SE" />
        </SearchBox>
      </NavRow>

      <Content>
        <TreePane aria-label="Область навигации">
          <TreeList>
            {treeItems.map(([icon, label], i) => (
              <li key={i}>
                <TreeLink href="#" aria-label={label}>
                  <svg width="36" height="36" viewBox="0 0 36 36">{treeIcons[icon]}</svg>
                </TreeLink>
              </li>
            ))}
          </TreeList>
        </TreePane>
        <ScrollBar>
          <ScrollButton aria-label="Прокрутить вверх"><Chevron w={12} h={9} up color="#555" sw={3} /></ScrollButton>
          <ScrollTrack><ScrollThumb /></ScrollTrack>
          <ScrollButton aria-label="Прокрутить вниз"><Chevron w={12} h={9} color="#555" sw={3} /></ScrollButton>
        </ScrollBar>
        <FilePane>
          <FileTable>
            <colgroup>
              <col style={{ width: 442 }} />
              <col style={{ width: 243 }} />
              <col style={{ width: 203 }} />
              <col style={{ width: 135 }} />
            </colgroup>
            <thead>
              <tr>
                <HeadCell scope="col">
                  Имя
                  <SortMark><Chevron w={12} h={7} up color="#777" sw={1} /></SortMark>
                </HeadCell>
                <HeadCell scope="col">Дата изменения</HeadCell>
                <HeadCell scope="col">Тип</HeadCell>
                <HeadCell scope="col">Размер</HeadCell>
              </tr>
            </thead>
            <tbody>
              {files.map((f) => (
                <tr key={f.name}>
                  <Cell><FileName href="#">{fileIcons[f.kind]}{f.name}</FileName></Cell>
                  <Cell>{f.date}</Cell>
                  <Cell>{f.type}</Cell>
                  <Cell $right>{f.size}</Cell>
                </tr>
              ))}
            </tbody>
          </FileTable>
        </FilePane>
      </Content>

      <StatusBar>
        <StatusText>Элементов: 10</StatusText>
        <ViewButton $on aria-label="Таблица"><DetailsIcon /></ViewButton>
        <ViewButton aria-label="Крупные значки"><PictureIcon /></ViewButton>
      </StatusBar>
    </Window>
  );
}
